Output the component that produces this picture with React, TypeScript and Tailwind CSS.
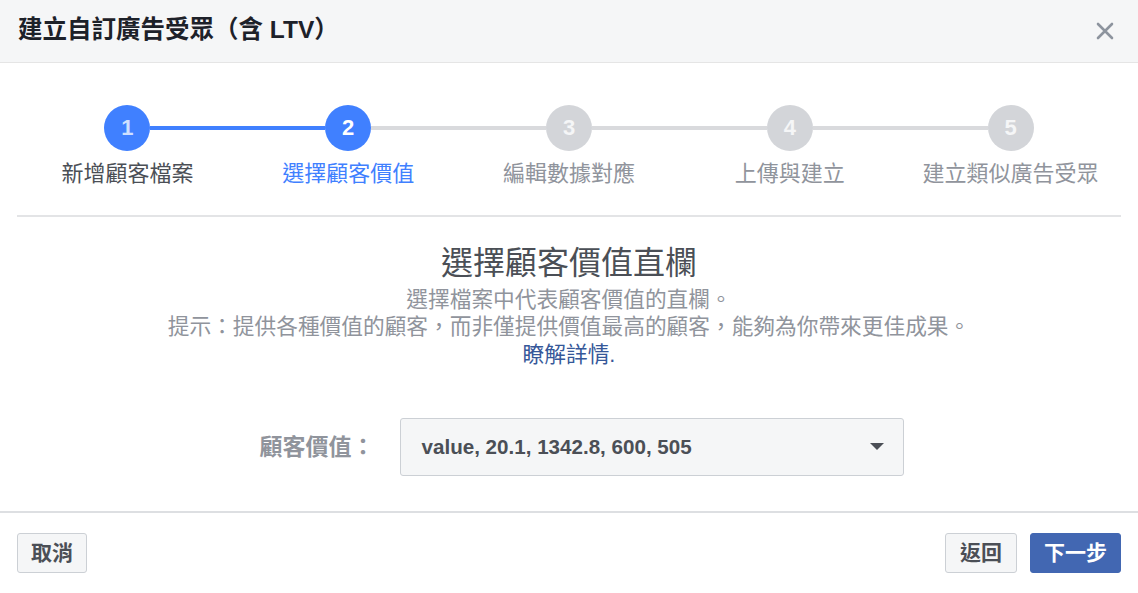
import React from "react";

const FONT = '"Liberation Sans", "Noto Sans CJK TC", sans-serif';

type Step = { n: number; label: string; state: "done" | "active" | "todo" };

const steps: Step[] = [
  { n: 1, label: "新增顧客檔案", state: "done" },
  { n: 2, label: "選擇顧客價值", state: "active" },
  { n: 3, label: "編輯數據對應", state: "todo" },
  { n: 4, label: "上傳與建立", state: "todo" },
  { n: 5, label: "建立類似廣告受眾", state: "todo" },
];

function Stepper() {
  return (
    <div className="grid grid-cols-5 pt-[42px]">
      {steps.map((s, i) => {
        const leftLine =
          i === 0 ? "bg-transparent" : i <= 1 ? "bg-[#4080ff]" : "bg-[#d9dadd]";
        const rightLine =
          i === steps.length - 1
            ? "bg-transparent"
            : i === 0
            ? "bg-[#4080ff]"
            : "bg-[#d9dadd]";
        const circle =
          s.state === "todo"
            ? "bg-[#d3d5d9] text-[#f5f6f7]"
            : s.state === "done"
            ? "bg-[#4080ff] text-[#cfe0ff]"
            : "bg-[#4080ff] text-white";
        const labelColor =
          s.state === "done"
            ? "text-[#4b4f56]"
            : s.state === "active"
            ? "text-[#4080ff]"
            : "text-[#90949c]";
        return (
          <div key={s.n} className="flex flex-col items-center">
            <div className="flex w-full items-center">
              <div className={`h-[4px] flex-1 ${leftLine}`} />
              <div
                className={`flex h-[46px] w-[46px] items-center justify-center rounded-full text-[22px] font-bold ${circle}`}
              >
                {s.n}
              </div>
              <div className={`h-[4px] flex-1 ${rightLine}`} />
            </div>
            <div className={`mt-[10px] text-[22px] leading-[26px] ${labelColor}`}>{s.label}</div>
          </div>
        );
      })}
    </div>
  );
}

export default function App() {
  return (
    <div className="flex h-[593px] w-[1138px] flex-col bg-white" style={{ fontFamily: FONT }}>
      {/* Header */}
      <div className="flex h-[63px] items-center justify-between border-b border-[#e5e5e5] bg-[#f5f6f7] pl-[18px] pr-[24px]">
        <div className="text-[24.5px] font-bold text-[#1d2129]">建立自訂廣告受眾（含 LTV）</div>
        <svg width="18" height="18" viewBox="0 0 18 18" className="text-[#8d949e]">
          <path d="M2 2L16 16M16 2L2 16" stroke="currentColor" strokeWidth="2.6" strokeLinecap="round" />
        </svg>
      </div>

      {/* Body */}
      <div className="px-[17px]">
        <Stepper />
        <div className="mt-[28px] h-[2px] bg-[#e3e4e6]" />

        <div className="mt-[26px] text-center text-[32px] leading-[40px] text-[#4b4f56]">
          選擇顧客價值直欄
        </div>
        <div className="mt-[3px] text-center text-[21.7px] leading-[27.5px] text-[#90949c]">
          <div>選擇檔案中代表顧客價值的直欄。</div>
          <div>提示：提供各種價值的顧客，而非僅提供價值最高的顧客，能夠為你帶來更佳成果。</div>
          <div>
            <a className="text-[#365899]">瞭解詳情.</a>
          </div>
        </div>

        <div className="mt-[50px] flex items-center justify-center gap-[25px] pl-[25px]">
          <div className="text-[23px] font-bold text-[#90949c]">顧客價值：</div>
          <div className="flex h-[58px] w-[504px] items-center justify-between rounded-[3px] border border-[#ccd0d5] bg-[#f5f6f7] pl-[21px] pr-[19px]">
            <span className="text-[20.6px] font-bold text-[#4b4f56]">value, 20.1, 1342.8, 600, 505</span>
            <svg width="14" height="8" viewBox="0 0 14 8">
              <path d="M0 0H14L7 7Z" fill="#4b4f56" />
            </svg>
          </div>
        </div>
      </div>

      {/* Footer */}
      <div className="mt-[35px] h-[2px] bg-[#dddfe2]" />
      <div className="flex items-center justify-between bg-white px-[17px] pt-[20px] pb-[20px]">
        <button className="h-[40px] w-[70px] rounded-[3px] border border-[#ccd0d5] bg-[#f5f6f7] text-[21px] font-bold text-[#4b4f56]">
          取消
        </button>
        <div className="flex gap-[13px]">
          <button className="h-[40px] w-[72px] rounded-[3px] border border-[#ccd0d5] bg-[#f5f6f7] text-[21px] font-bold text-[#4b4f56]">
            返回
          </button>
          <button className="h-[40px] w-[91px] rounded-[3px] border border-[#4267b2] bg-[#4267b2] text-[21px] font-bold text-white">
            下一步
          </button>
        </div>
      </div>
      <div className="flex-1 bg-[#f7f8fa]" />
    </div>
  );
}
